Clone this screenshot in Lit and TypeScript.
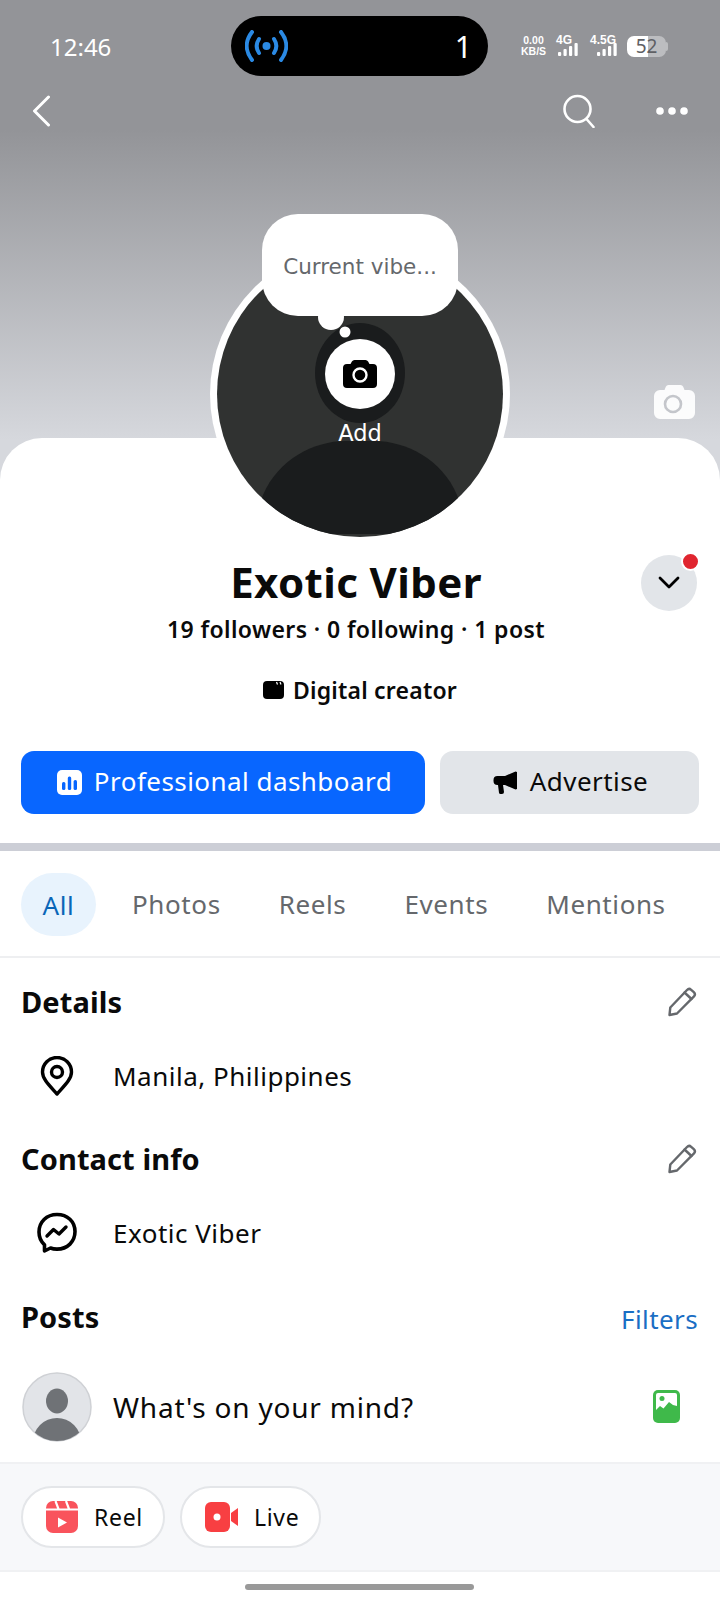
import { LitElement, html, css, svg } from 'lit';
import { customElement } from 'lit/decorators.js';

const pencil = html`<svg class="pencil" viewBox="0 0 30 30" fill="none" stroke="#65686c" stroke-width="2.4" stroke-linejoin="round" stroke-linecap="round">
  <path d="M2.500 28l.8-7.500L20 3a3 3 0 0 1 4.200-.2l2.600 2.400a3 3 0 0 1 .2 4.200L10 26.500z"/>
  <path d="M17.500 5.500l7 6.500"/>
</svg>`;

const signal = (bars: number[], h: number) => svg`${bars.map(
  (b, i) => svg`<rect x=${i * 5.5} y=${h - b} width="3.200" height=${b} rx="1" fill="#fff"/>`
)}`;

@customElement('app-root')
export class AppRoot extends LitElement {
  static styles = css`
    :host {
      display: block;
      width: 720px;
      height: 1600px;
      overflow: hidden;
      background: #fff;
      font-family: 'Noto Sans', 'DejaVu Sans', sans-serif;
      color: #0a0a0a;
    }
    svg { display: block; flex: none; }

    .hero {
      position: relative;
      height: 480px;
      background: linear-gradient(#939498 0, #939498 130px, #d6d8dd 440px);
    }
    .status {
      display: flex;
      align-items: center;
      height: 60px;
      padding: 16px 0 0 50px;
      color: #fff;
    }
    .time { width: 181px; font-size: 24px; }
    .island {
      display: flex;
      align-items: center;
      justify-content: space-between;
      width: 257px;
      height: 60px;
      padding: 0 16px 0 14px;
      box-sizing: border-box;
      background: #000;
      border-radius: 30px;
      font-size: 30px;
    }
    .sysicons { display: flex; align-items: center; margin-left: 33px; }
    .speed { width: 25px; font: 700 10.500px/11px 'Liberation Sans', sans-serif; text-align: center; white-space: nowrap; }
    .net { position: relative; height: 22px; margin-left: 10px; }
    .net.g4 { width: 22px; }
    .net.g45 { width: 27px; margin-left: 12px; }
    .net span { position: absolute; left: 0; top: 0; font: 700 12px/11px 'Liberation Sans', sans-serif; }
    .net svg { position: absolute; left: 2px; bottom: 1px; }
    .net.g45 svg { left: 7px; }
    .battery {
      position: relative;
      width: 39px;
      height: 21px;
      margin-left: 10px;
      border-radius: 7px;
      background: linear-gradient(90deg, #fff 0 21px, #bcbdc0 21px);
      color: #5f6064;
      font-size: 19px;
      line-height: 21px;
      text-align: center;
    }
    .battery::after {
      content: '';
      position: absolute;
      left: 39px;
      top: 6px;
      width: 2px;
      height: 9px;
      border-radius: 0 2px 2px 0;
      background: #bcbdc0;
    }
    .nav {
      display: flex;
      align-items: center;
      height: 32px;
      padding: 19px 32px 0 32px;
      gap: 59px;
    }
    .nav .back { margin-right: auto; }

    .avatar { position: absolute; left: 210px; top: 244px; z-index: 2; }
    .bubble {
      position: absolute;
      left: 262px;
      top: 214px;
      z-index: 3;
      width: 196px;
      height: 102px;
      border-radius: 36px;
      background: #fff;
      color: #65686c;
      font: 21.500px 'DejaVu Sans', sans-serif;
      text-align: center;
      line-height: 106px;
    }
    .add {
      position: absolute;
      left: 0;
      width: 720px;
      top: 418px;
      z-index: 3;
      color: #fff;
      font: 22.500px/30px 'DejaVu Sans', sans-serif;
      text-align: center;
    }
    .cover-cam { position: absolute; left: 654px; top: 385px; }

    .sheet {
      position: relative;
      margin-top: -42px;
      background: #fff;
      border-radius: 42px 42px 0 0;
    }
    .profile {
      position: relative;
      height: 405px;
      text-align: center;
    }
    .name { position: absolute; left: 0; right: 8px; top: 119px; margin: 0; font-size: 42px; letter-spacing: .4px; line-height: 50px; font-weight: 700; }
    .stats { position: absolute; left: 0; right: 8px; top: 176px; font-size: 23px; letter-spacing: .4px; line-height: 30px; font-weight: 600; }
    .role {
      position: absolute; left: 0; right: 0; top: 237px;
      display: flex; align-items: center; justify-content: center; gap: 9px;
      font-size: 23px; letter-spacing: .2px; line-height: 30px; font-weight: 600;
    }
    .more {
      position: absolute; left: 641px; top: 117px;
      display: flex; align-items: center; justify-content: center;
      width: 56px; height: 56px; border-radius: 50%; background: #e2e5e9;
    }
    .more i {
      position: absolute; left: 40px; top: -3px;
      width: 15px; height: 15px; border-radius: 50%;
      background: #e0252f; border: 2px solid #fff;
    }
    .actions {
      position: absolute; left: 21px; right: 21px; top: 313px;
      display: flex; gap: 15px;
    }
    .btn {
      display: flex; align-items: center; justify-content: center; gap: 12px;
      height: 63px; border-radius: 13px;
      font-size: 26px; letter-spacing: .45px;
    }
    .btn span { position: relative; top: -2px; }
    .btn.primary { width: 404px; box-sizing: border-box; padding-left: 3px; background: #0866ff; color: #fff; }
    .btn.secondary { width: 259px; background: #e2e5e9; }

    .rule { height: 8px; background: #ccced6; }
    .tabs {
      display: flex; align-items: center; height: 105px; border-bottom: 2px solid #eeeff1;
      padding-left: 21px; font-size: 26px; letter-spacing: .6px; color: #65686c;
    }
    .tab { margin-left: 58px; }
    .tab.first { margin-left: 36px; }
    .tab.active {
      position: relative; top: 1px;
      display: flex; align-items: center; justify-content: center;
      width: 75px; height: 63px; margin: 0; border-radius: 32px;
      background: #e8f3fd; color: #0a66b8;
    }
    .section { display: flex; align-items: center; justify-content: space-between; height: 30px; padding: 0 22px 0 21px; }
    .section h2 { margin: 0; font-size: 29px; letter-spacing: .1px; line-height: 30px; font-weight: 700; }
    .pencil { width: 30px; height: 30px; margin-right: 1px; }
    .row { display: flex; align-items: center; height: 42px; padding-left: 36px; font-size: 26px; letter-spacing: .5px; }
    .row .icon { width: 42px; display: flex; justify-content: center; margin-right: 35px; }
    .filters { position: relative; top: 2px; color: #1a6ec4; font-size: 26px; letter-spacing: .4px; }

    .composer { display: flex; align-items: center; height: 111px; padding: 0 40px 0 22px; border-bottom: 2px solid #f0f1f3; }
    .composer span { margin-left: 21px; margin-right: auto; font-size: 28px; letter-spacing: .8px; }
    .create { display: flex; gap: 15px; height: 108px; align-items: center; padding: 0 21px; background: #f7f8fa; border-bottom: 2px solid #f0f1f3; box-sizing: border-box; }
    .pill {
      display: flex; align-items: center; gap: 16px;
      height: 62px; padding: 0 20px 0 23px; box-sizing: border-box;
      background: #fff; border: 2px solid #e4e6e9; border-radius: 31px; font-size: 23px; letter-spacing: .7px;
    }
    .home { position: absolute; left: 245px; top: 1584px; width: 229px; height: 6px; border-radius: 3px; background: #999; z-index: 4; }
  `;

  render() {
    return html`
      <div class="hero">
        <div class="status">
          <div class="time">12:46</div>
          <div class="island">
            <svg width="43" height="32" viewBox="0 0 43 32" fill="none" stroke="#2b8ae4" stroke-width="4" stroke-linecap="round">
              <circle cx="21.500" cy="16" r="4" fill="#2b8ae4" stroke="none"/>
              <path d="M14 9c-3 4.500-3 9.500 0 14M29 9c3 4.500 3 9.500 0 14"/>
              <path d="M7 2c-7 9-7 19 0 28M36 2c7 9 7 19 0 28"/>
            </svg>
            <span>1</span>
          </div>
          <div class="sysicons">
            <div class="speed">0.00<br />KB/S</div>
            <div class="net g4"><span>4G</span><svg width="20" height="13" viewBox="0 0 20 13">${signal([4, 7, 10, 13], 13)}</svg></div>
            <div class="net g45"><span>4.5G</span><svg width="20" height="13" viewBox="0 0 20 13">${signal([4, 7, 10, 13], 13)}</svg></div>
            <div class="battery">52</div>
          </div>
        </div>
        <div class="nav">
          <svg class="back" width="20" height="32" viewBox="0 0 20 32" fill="none" stroke="#fff" stroke-width="3" stroke-linecap="round" stroke-linejoin="round"><path d="M16.500 2 2.500 16l14 14"/></svg>
          <svg width="34" height="34" viewBox="0 0 34 34" fill="none" stroke="#fff" stroke-width="2.600" stroke-linecap="round"><circle cx="14.500" cy="15" r="13"/><path d="M23.500 25l7 8"/></svg>
          <svg width="32" height="8" viewBox="0 0 32 8" fill="#fff"><circle cx="4" cy="4" r="3.800"/><circle cx="16" cy="4" r="3.800"/><circle cx="28" cy="4" r="3.800"/></svg>
        </div>
        <svg class="cover-cam" width="41" height="34" viewBox="0 0 41 34">
          <path fill="#fff" fill-opacity=".92" d="M14.500 0h12a3 3 0 0 1 2.700 1.700L30.500 5H35a6 6 0 0 1 6 6v17a6 6 0 0 1-6 6H6a6 6 0 0 1-6-6V11a6 6 0 0 1 6-6h4.500l1.300-3.300A3 3 0 0 1 14.500 0z"/>
          <circle cx="19" cy="19" r="8" fill="none" stroke="#c4c6cb" stroke-width="2.600"/>
        </svg>
      </div>

      <svg class="avatar" width="300" height="300" viewBox="0 0 300 300">
        <defs><clipPath id="inner"><circle cx="150" cy="150" r="143"/></clipPath></defs>
        <circle cx="150" cy="150" r="150" fill="#fff"/>
        <circle cx="150" cy="150" r="143" fill="#303231"/>
        <g clip-path="url(#inner)" fill="#1a1c1d">
          <ellipse cx="150" cy="129" rx="45" ry="50"/>
          <path d="M40 290 53 251C68 215 105 197 135 197h30c30 0 67 18 82 54l13 39z"/>
        </g>
        <circle cx="150" cy="130" r="35" fill="#fff"/>
        <path fill="#000" d="M144.500 116h11a3 3 0 0 1 2.600 1.500l1.400 2.500h3.500a4 4 0 0 1 4 4v16a4 4 0 0 1-4 4h-26a4 4 0 0 1-4-4v-16a4 4 0 0 1 4-4h3.500l1.400-2.500a3 3 0 0 1 2.600-1.500z"/>
        <circle cx="150" cy="131" r="6.500" fill="#000" stroke="#fff" stroke-width="2.400"/>
        <circle cx="121" cy="73" r="13" fill="#fff"/>
        <circle cx="135" cy="88" r="5.500" fill="#fff"/>
      </svg>
      <div class="bubble">Current vibe...</div>
      <div class="add">Add</div>

      <div class="sheet">
        <div class="profile">
          <h1 class="name">Exotic Viber</h1>
          <div class="stats">19 followers · 0 following · 1 post</div>
          <div class="role">
            <svg width="21" height="18" viewBox="0 0 21 18"><path d="M4 0h13a4 4 0 0 1 4 4v10a4 4 0 0 1-4 4H4a4 4 0 0 1-4-4V4a4 4 0 0 1 4-4z" fill="#000"/><path d="M13.500 1l1 2.500M17 1l1 2.500" stroke="#fff" stroke-width="1.200"/></svg>
            <span>Digital creator</span>
          </div>
          <div class="more">
            <svg width="22" height="14" viewBox="0 0 22 14" fill="none" stroke="#000" stroke-width="2.800" stroke-linecap="round" stroke-linejoin="round"><path d="M2 2l9 9 9-9"/></svg>
            <i></i>
          </div>
          <div class="actions">
            <div class="btn primary">
              <svg width="25" height="25" viewBox="0 0 25 25"><rect width="25" height="25" rx="5" fill="#fff"/><g fill="#0866ff"><rect x="5" y="12" width="3.400" height="8" rx="1.500"/><rect x="10.800" y="6.500" width="3.400" height="13.500" rx="1.500"/><rect x="16.600" y="10" width="3.400" height="10" rx="1.500"/></g></svg>
              <span>Professional dashboard</span>
            </div>
            <div class="btn secondary">
              <svg width="27" height="25" viewBox="0 0 27 25"><path d="M26 1v17l-1.500.5L14 14H6.500a4 4 0 0 1-4-4V9a4 4 0 0 1 4-4H14L24.500.5z" fill="#000" transform="translate(0 1)"/><path d="M7 15h5l1 7a2 2 0 0 1-2 2H9.500a1.500 1.500 0 0 1-1.500-1.300z" fill="#000"/></svg>
              <span>Advertise</span>
            </div>
          </div>
        </div>

        <div class="rule"></div>
        <div class="tabs">
          <div class="tab active">All</div>
          <div class="tab first">Photos</div>
          <div class="tab">Reels</div>
          <div class="tab">Events</div>
          <div class="tab">Mentions</div>
        </div>

        <div class="section" style="margin-top: 29px"><h2>Details</h2>${pencil}</div>
        <div class="row" style="margin-top: 38px">
          <div class="icon">
            <svg width="34" height="40" viewBox="0 0 34 40" fill="none" stroke="#000" stroke-width="3.400"><path stroke-linejoin="round" d="M17 38C9 29 2.500 23 2.500 16a14.500 14.500 0 0 1 29 0C31.500 23 25 29 17 38z"/><circle cx="17" cy="16" r="5.500"/></svg>
          </div>
          Manila, Philippines
        </div>
        <div class="section" style="margin-top: 47px"><h2>Contact info</h2>${pencil}</div>
        <div class="row" style="margin-top: 38px">
          <div class="icon">
            <svg width="42" height="42" viewBox="0 0 42 42" fill="none" stroke="#000" stroke-width="3.600" stroke-linejoin="round"><path d="M21 2.500C10.500 2.500 3 10 3 20c0 5.200 2 9.600 5.500 12.800V39l6-3c2 .8 4.200 1.100 6.500 1.100 10.500 0 18-7.500 18-17.500S31.500 2.500 21 2.500z"/><path stroke-width="3.400" stroke-linecap="round" d="M11 24l6.500-6.500 5.500 4.500 7-7"/></svg>
          </div>
          Exotic Viber
        </div>
        <div class="section" style="margin-top: 48px"><h2>Posts</h2><span class="filters">Filters</span></div>

        <div class="composer" style="margin-top: 19px">
          <svg width="70" height="70" viewBox="0 0 70 70">
            <defs><clipPath id="pic"><circle cx="35" cy="35" r="34"/></clipPath></defs>
            <circle cx="35" cy="35" r="34" fill="#e2e4e8" stroke="#cfd1d5" stroke-width="1.500"/>
            <g clip-path="url(#pic)" fill="#6f7276">
              <ellipse cx="35" cy="29" rx="11" ry="12.500"/>
              <ellipse cx="35" cy="70" rx="24" ry="24"/>
            </g>
          </svg>
          <span>What's on your mind?</span>
          <svg width="27" height="33" viewBox="0 0 27 33"><rect width="27" height="33" rx="5" fill="#3fb94a"/><rect x="3" y="3" width="21" height="21" rx="2" fill="#fff"/><circle cx="9" cy="8.500" r="2.500" fill="#3fb94a"/><path fill="#3fb94a" d="M3 20l4-4 3.500 2.500L16 12l4 3 4 1v14H3z"/></svg>
        </div>

        <div class="create">
          <div class="pill">
            <svg width="32" height="32" viewBox="0 0 32 32"><rect width="32" height="32" rx="7" fill="#f9535c"/><path stroke="#fff" stroke-width="2.200" d="M0 8.500h32M9.500 0l3 8M20 0l3 8"/><path fill="#fff" d="M12 16.500l9 5-9 5z"/></svg>
            <span>Reel</span>
          </div>
          <div class="pill">
            <svg width="33" height="30" viewBox="0 0 33 30"><rect width="25" height="30" rx="6" fill="#f83f42"/><path fill="#f83f42" d="M26 11l7-5v18l-7-5z"/><circle cx="12" cy="15" r="3.500" fill="#fff"/></svg>
            <span>Live</span>
          </div>
        </div>
      </div>
      <div class="home"></div>
    `;
  }
}
